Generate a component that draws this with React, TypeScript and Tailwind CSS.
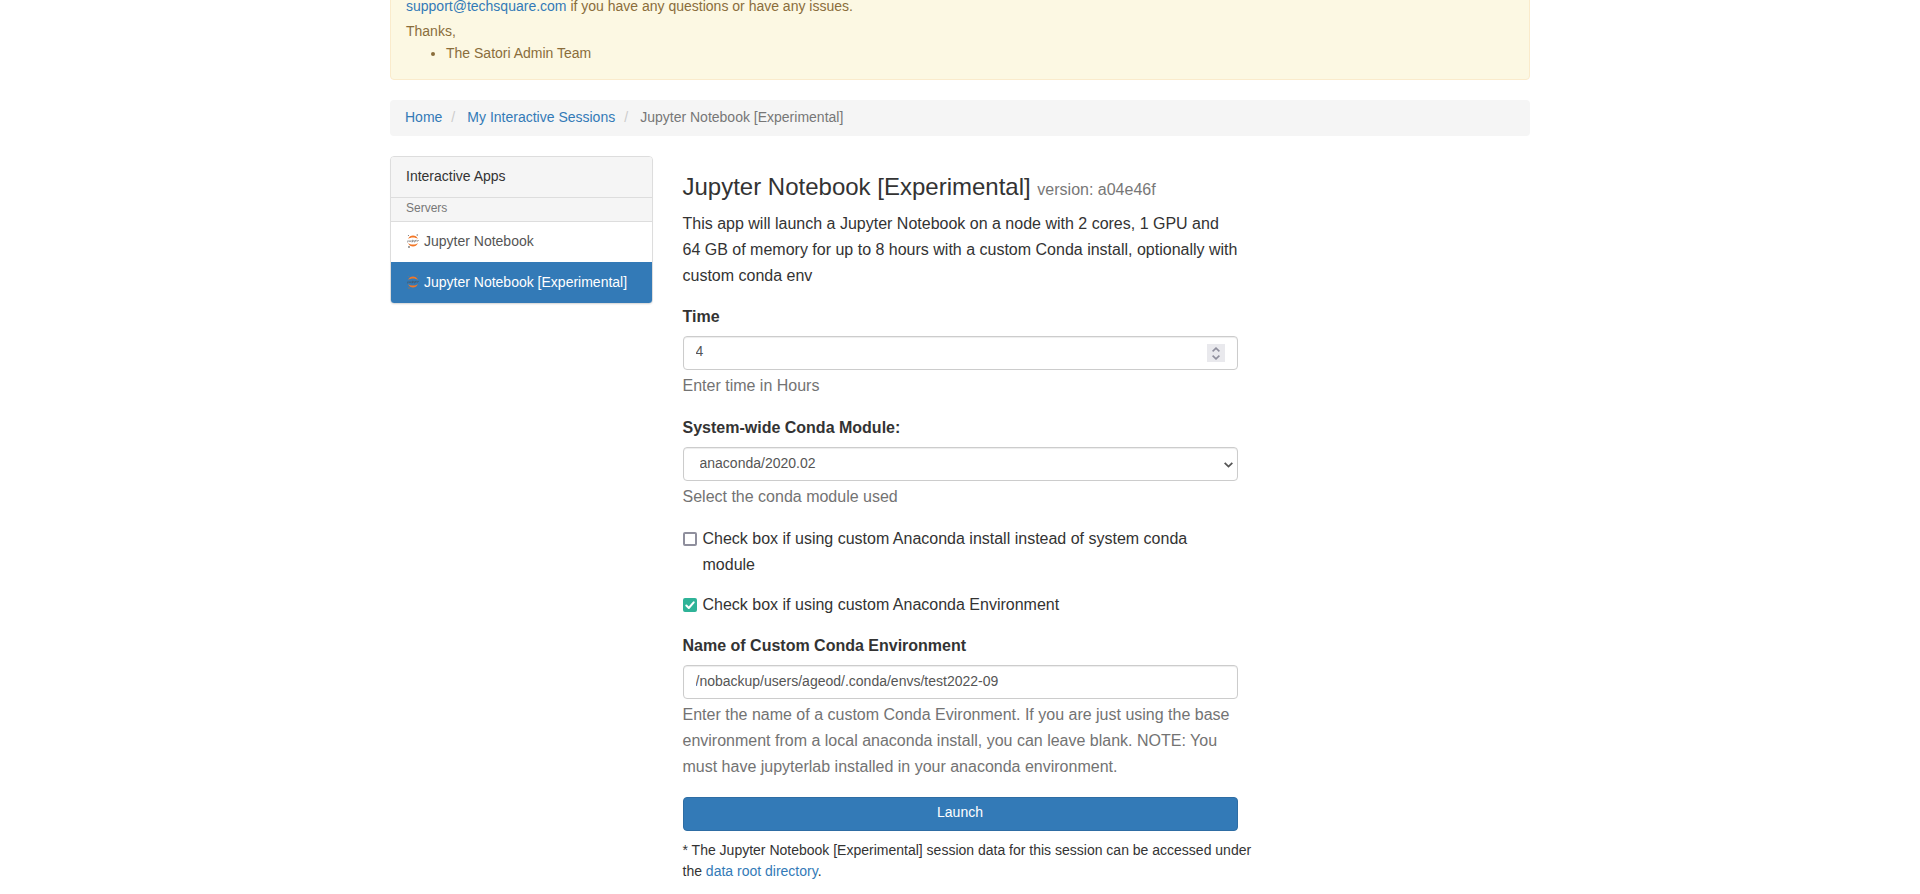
import { useState } from "react";
import type { ReactNode } from "react";

const control =
  "block h-[34px] w-full rounded border border-[#ccc] bg-white text-sm text-[#555] shadow-[inset_0_1px_1px_rgba(0,0,0,0.075)] outline-none focus:border-[#66afe9]";

const link = "text-[#337ab7] hover:underline";

function JupyterIcon() {
  return (
    <svg viewBox="0 0 24 28" className="h-3.5 w-3 shrink-0" aria-hidden="true">
      <path d="M2 10C4 5 8 3 12 3S20 5 22 10C19 8 16 7 12 7S5 8 2 10Z" fill="#f37726" />
      <path d="M2 18C4 23 8 25 12 25S20 23 22 18C19 20 16 21 12 21S5 20 2 18Z" fill="#f37726" />
      <path
        d="M2 12.500v3.500H0M4.500 12.500v2.500h3v-2.500M10 17v-4.500h2.500v2.500H10M14 12.500l1.500 2.500 1.500-2.500-2 4.500M18.500 11.500v3.500M21 15.500v-2.500h3"
        fill="none"
        stroke="#4e4e4e"
        strokeWidth="1.200"
        opacity="0.8"
      />
      <circle cx="20.500" cy="2" r="1.500" fill="#767677" />
      <circle cx="3" cy="3" r="1.200" fill="#767677" />
      <circle cx="4" cy="26" r="1.800" fill="#767677" />
    </svg>
  );
}

function Chevron({ up = false, className }: { up?: boolean; className: string }) {
  return (
    <svg viewBox="0 0 8 5" className={className} fill="none" stroke="currentColor" strokeWidth="1.600" aria-hidden="true">
      <path d={up ? "M0.600 4.400 4 1.100 7.400 4.400" : "M0.600 0.600 4 3.900 7.400 0.600"} />
    </svg>
  );
}

function Field({ id, label, help, children }: { id: string; label: string; help: string; children: ReactNode }) {
  return (
    <div className="pb-px">
      <label htmlFor={id} className="mb-1.5 block font-bold">
        {label}
      </label>
      {children}
      <p className="mt-[3px] text-[#737373]">{help}</p>
    </div>
  );
}

function Check({ id, label, checked, onChange }: { id: string; label: string; checked: boolean; onChange: (v: boolean) => void }) {
  return (
    <div className="flex items-start gap-1.5">
      <span className="relative mt-1.5 flex h-3.5 w-3.5 shrink-0">
        <input
          id={id}
          type="checkbox"
          checked={checked}
          onChange={(e) => onChange(e.target.checked)}
          className="h-3.5 w-3.5 appearance-none rounded-xs border-2 border-[#8f8f9d] bg-white checked:border-[#2fb398] checked:bg-[#2fb398]"
        />
        {checked && (
          <svg viewBox="0 0 14 14" className="pointer-events-none absolute inset-0 h-3.5 w-3.5" fill="none" stroke="white" strokeWidth="2" strokeLinecap="round" strokeLinejoin="round" aria-hidden="true">
            <path d="M3.300 7.500 5.800 10 10.700 4.300" />
          </svg>
        )}
      </span>
      <label htmlFor={id}>{label}</label>
    </div>
  );
}

export default function App() {
  const [hours, setHours] = useState(4);
  const [customInstall, setCustomInstall] = useState(false);
  const [customEnv, setCustomEnv] = useState(true);
  const [envName, setEnvName] = useState("/nobackup/users/ageod/.conda/envs/test2022-09");

  return (
    <div className="overflow-hidden bg-white font-['Liberation_Sans',Arial,sans-serif] text-sm text-[#333]">
      <div className="mx-auto -mt-5 max-w-[1170px] px-[15px] pb-3">
        <div role="alert" className="mb-5 rounded border border-[#faebcc] bg-[#fcf8e3] px-[15px] pt-[15px] pb-4 text-[#8a6d3b]">
          <p>
            <a href="mailto:support@techsquare.com" className={link}>
              support@techsquare.com
            </a>{" "}
            if you have any questions or have any issues.
          </p>
          <p className="mt-[5px]">Thanks,</p>
          <ul className="mt-0.5 list-disc pl-10">
            <li>The Satori Admin Team</li>
          </ul>
        </div>

        <nav aria-label="Breadcrumb" className="mb-5 rounded bg-[#f5f5f5] px-[15px] pt-[7px] pb-[9px]">
          <ol className="flex">
            <li>
              <a href="#home" className={link}>Home</a>
            </li>
            <li className="flex">
              <span className="w-[25px] pl-[9px] text-[#ccc]">/</span>
              <a href="#sessions" className={link}>My Interactive Sessions</a>
            </li>
            <li className="flex text-[#777]">
              <span className="w-[25px] pl-[9px] text-[#ccc]">/</span>
              Jupyter Notebook [Experimental]
            </li>
          </ol>
        </nav>

        <div className="grid grid-cols-1 gap-[30px] md:grid-cols-4">
          <aside className="self-start overflow-hidden rounded border border-[#ddd] shadow-[0_1px_1px_rgba(0,0,0,0.05)]">
            <h2 className="bg-[#f5f5f5] px-[15px] pt-[9px] pb-[11px]">Interactive Apps</h2>
            <p className="border-y border-[#ddd] bg-[#f5f5f5] px-[15px] pt-px pb-1 text-xs leading-[18px] text-[#777]">Servers</p>
            <a href="#jupyter" className="flex items-center gap-[5px] px-4 pt-[9px] pb-[11px] text-[#555]">
              <JupyterIcon />
              Jupyter Notebook
            </a>
            <a href="#jupyter-experimental" aria-current="page" className="flex items-center gap-[5px] bg-[#337ab7] px-4 pt-2.5 pb-[11px] text-white">
              <JupyterIcon />
              Jupyter Notebook [Experimental]
            </a>
          </aside>

          <main className="text-base leading-[26px] md:col-span-2">
            <h3 className="mt-[18px] mb-[11px] text-2xl leading-[26px]">
              Jupyter Notebook [Experimental] <small className="text-base leading-none text-[#777]">version: a04e46f</small>
            </h3>
            <p>
              This app will launch a Jupyter Notebook on a node with 2 cores, 1 GPU and 64 GB of memory for up to 8 hours with a custom Conda install, optionally with custom conda env
            </p>

            <form className="mt-[15px] flex flex-col gap-[15px]" onSubmit={(e) => e.preventDefault()}>
              <Field id="hours" label="Time" help="Enter time in Hours">
                <div className="relative">
                  <input
                    id="hours"
                    type="number"
                    value={hours}
                    onChange={(e) => setHours(Number(e.target.value))}
                    className={`${control} px-3 pt-1 pb-2 [appearance:textfield] [&::-webkit-inner-spin-button]:appearance-none`}
                  />
                  <div className="absolute top-2 right-[13px] flex h-[18px] w-[18px] flex-col bg-[#e9e9ed] py-px text-[#8f8f9d]">
                    <button type="button" aria-label="Increase hours" onClick={() => setHours(hours + 1)} className="flex flex-1 items-center justify-center">
                      <Chevron up className="h-[5px] w-2" />
                    </button>
                    <button type="button" aria-label="Decrease hours" onClick={() => setHours(hours - 1)} className="flex flex-1 items-center justify-center">
                      <Chevron className="h-[5px] w-2" />
                    </button>
                  </div>
                </div>
              </Field>

              <Field id="module" label="System-wide Conda Module:" help="Select the conda module used">
                <div className="relative">
                  <select id="module" className={`${control} appearance-none px-4 pt-[5px] pb-[7px]`}>
                    <option>anaconda/2020.02</option>
                  </select>
                  <Chevron className="pointer-events-none absolute top-[15px] right-[5px] h-[6px] w-[9px] text-[#555]" />
                </div>
              </Field>

              <div className="flex flex-col gap-3.5">
                <Check
                  id="custom-install"
                  label="Check box if using custom Anaconda install instead of system conda module"
                  checked={customInstall}
                  onChange={setCustomInstall}
                />
                <Check id="custom-env" label="Check box if using custom Anaconda Environment" checked={customEnv} onChange={setCustomEnv} />
              </div>

              <Field
                id="env-name"
                label="Name of Custom Conda Environment"
                help="Enter the name of a custom Conda Evironment. If you are just using the base environment from a local anaconda install, you can leave blank. NOTE: You must have jupyterlab installed in your anaconda environment."
              >
                <input id="env-name" type="text" value={envName} onChange={(e) => setEnvName(e.target.value)} className={`${control} px-3 pt-[5px] pb-[7px]`} />
              </Field>

              <button type="submit" className="mt-px h-[34px] rounded border border-[#2e6da4] bg-[#337ab7] pb-1 text-sm text-white hover:bg-[#286090]">
                Launch
              </button>
            </form>

            <p className="-mr-4 mt-[9px] text-sm leading-[21px]">
              * The Jupyter Notebook [Experimental] session data for this session can be accessed under the{" "}
              <a href="#data-root" className={link}>data root directory</a>.
            </p>
          </main>
        </div>
      </div>
    </div>
  );
}
